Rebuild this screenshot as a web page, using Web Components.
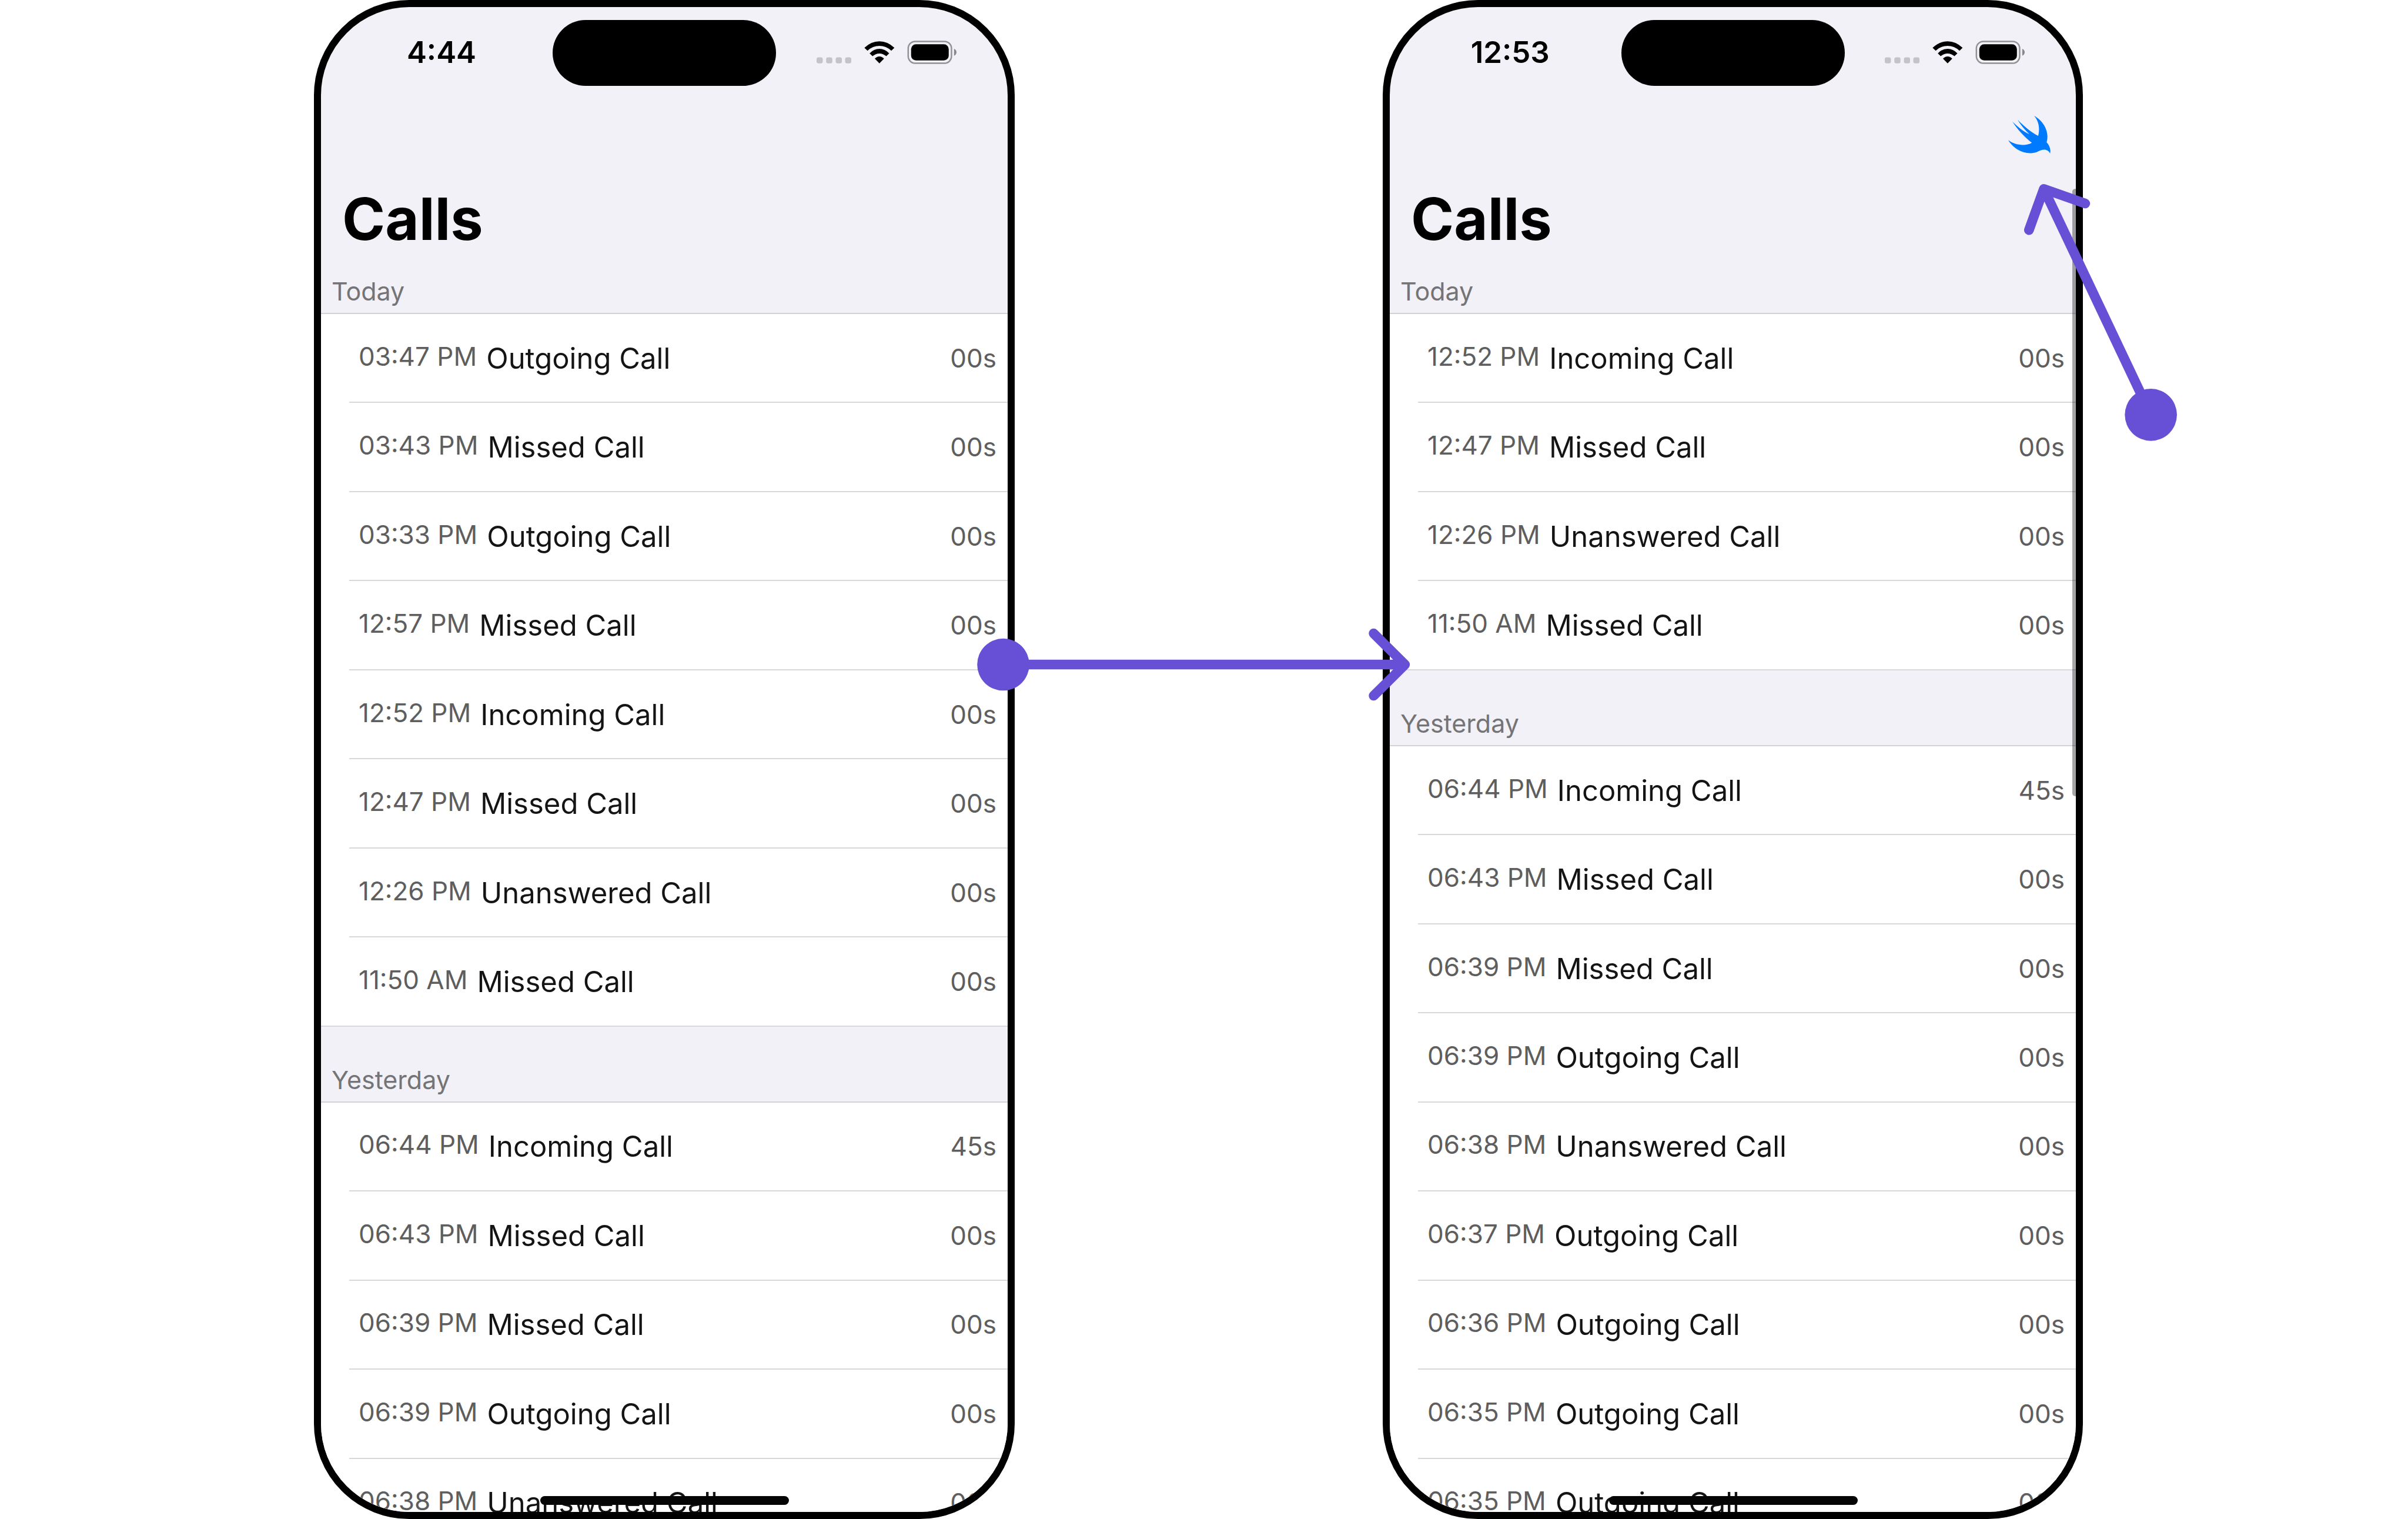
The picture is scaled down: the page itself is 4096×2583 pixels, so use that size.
<!DOCTYPE html>
<html lang="en">
<head>
<meta charset="utf-8">
<title>Calls</title>
<style>
  html, body { margin: 0; height: 100%; background: #fff; overflow: hidden; }
  body { font-family: Inter, "Noto Sans", "Liberation Sans", sans-serif; }
</style>
</head>
<body>
<flow-board>
  <phone-frame time="4:44">
    <call-section label="Today" compact>
      <call-row time="03:47 PM" duration="00s">Outgoing Call</call-row>
      <call-row time="03:43 PM" duration="00s">Missed Call</call-row>
      <call-row time="03:33 PM" duration="00s">Outgoing Call</call-row>
      <call-row time="12:57 PM" duration="00s">Missed Call</call-row>
      <call-row time="12:52 PM" duration="00s">Incoming Call</call-row>
      <call-row time="12:47 PM" duration="00s">Missed Call</call-row>
      <call-row time="12:26 PM" duration="00s">Unanswered Call</call-row>
      <call-row time="11:50 AM" duration="00s">Missed Call</call-row>
    </call-section>
    <call-section label="Yesterday">
      <call-row time="06:44 PM" duration="45s">Incoming Call</call-row>
      <call-row time="06:43 PM" duration="00s">Missed Call</call-row>
      <call-row time="06:39 PM" duration="00s">Missed Call</call-row>
      <call-row time="06:39 PM" duration="00s">Outgoing Call</call-row>
      <call-row time="06:38 PM" duration="00s">Unanswered Call</call-row>
    </call-section>
  </phone-frame>
  <phone-frame time="12:53" scrolling>
    <swift-button slot="action"></swift-button>
    <call-section label="Today" compact>
      <call-row time="12:52 PM" duration="00s">Incoming Call</call-row>
      <call-row time="12:47 PM" duration="00s">Missed Call</call-row>
      <call-row time="12:26 PM" duration="00s">Unanswered Call</call-row>
      <call-row time="11:50 AM" duration="00s">Missed Call</call-row>
    </call-section>
    <call-section label="Yesterday">
      <call-row time="06:44 PM" duration="45s">Incoming Call</call-row>
      <call-row time="06:43 PM" duration="00s">Missed Call</call-row>
      <call-row time="06:39 PM" duration="00s">Missed Call</call-row>
      <call-row time="06:39 PM" duration="00s">Outgoing Call</call-row>
      <call-row time="06:38 PM" duration="00s">Unanswered Call</call-row>
      <call-row time="06:37 PM" duration="00s">Outgoing Call</call-row>
      <call-row time="06:36 PM" duration="00s">Outgoing Call</call-row>
      <call-row time="06:35 PM" duration="00s">Outgoing Call</call-row>
      <call-row time="06:35 PM" duration="00s">Outgoing Call</call-row>
    </call-section>
  </phone-frame>
</flow-board>

<script>
function define(name, html, ready) {
  const template = document.createElement('template');
  template.innerHTML = html;
  customElements.define(name, class extends HTMLElement {
    connectedCallback() {
      if (this.shadowRoot) return;
      this.attachShadow({ mode: 'open' }).append(template.content.cloneNode(true));
      if (ready) ready(this, this.shadowRoot);
    }
  });
}

// Board: two phones side by side, with the flow arrows laid over them
define('flow-board', `
  <style>
    :host { display: grid; position: relative; height: 100vh;
      grid-template-columns: 534fr 1192fr 626fr 1191fr 553fr; grid-template-rows: 100%; }
    ::slotted(:nth-child(1)) { grid-column: 2; }
    ::slotted(:nth-child(2)) { grid-column: 4; }
    flow-arrows { position: absolute; inset: 0; }
  </style>
  <slot></slot>
  <flow-arrows></flow-arrows>`);

define('flow-arrows', `
  <style>
    :host { display: block; pointer-events: none; }
    svg { display: block; width: 100%; height: 100%; }
  </style>
  <svg viewBox="0 0 4947 3120" aria-hidden="true">
    <g fill="none" stroke="#6850d6" stroke-width="20" stroke-linecap="round" stroke-linejoin="round">
      <path d="M2061 1365H2886M2822 1301L2886.500 1365L2822 1429"/>
      <path d="M4419 852L4199 388M4168.500 472.500L4199 388L4284 418"/>
    </g>
    <g fill="#6850d6">
      <circle cx="2061" cy="1365" r="53.500"/>
      <circle cx="4419" cy="852" r="53.500"/>
    </g>
  </svg>`);

define('status-bar', `
  <style>
    :host { flex: none; display: grid; grid-template-columns: 1fr 380px 1fr; align-items: center; padding-top: 22px; }
    .time { padding: 0 0 2px 16px; text-align: center; font-size: 51px; line-height: 60px; font-weight: 600; color: #000; }
    .island { height: 112px; border-radius: 56px; background: #000; }
    svg { display: block; justify-self: end; width: 238px; height: 40px; margin: 0 87px 2px 0; }
  </style>
  <div class="time"></div>
  <div class="island"></div>
  <svg viewBox="97 128 863 144" aria-hidden="true">
    <g fill="#c4c3c9">
      <rect x="97" y="231" width="38" height="37" rx="12"/>
      <rect x="156" y="231" width="38" height="37" rx="12"/>
      <rect x="215" y="231" width="38" height="37" rx="12"/>
      <rect x="273" y="231" width="38" height="37" rx="12"/>
    </g>
    <g fill="#000">
      <path d="M392 172Q433 132 484.500 132Q536 132 577 172L558 190Q526 160 484.500 160Q443 160 411 190Z"/>
      <path d="M424 206Q450 178 484.500 178Q519 178 545 206L527 224Q508 207 484.500 207Q461 207 442 224Z"/>
      <path d="M456 239Q468 225 484.500 225Q501 225 513 239L484.500 268Z"/>
    </g>
    <rect x="662" y="133" width="267" height="134" rx="43" fill="none" stroke="#929294" stroke-width="9"/>
    <rect x="680" y="150" width="232" height="100" rx="30" fill="#000"/>
    <path d="M945 178Q960 185 960 199Q960 214 945 221Z" fill="#88888b"/>
  </svg>`,
  (host, root) => { root.querySelector('.time').textContent = host.getAttribute('time'); });

define('phone-frame', `
  <style>
    :host { display: block; box-sizing: border-box; min-width: 0; height: 100%; position: relative;
      border: 12px solid #000; border-radius: 162px; overflow: hidden; background: #f2f1f7; }
    .screen { display: flex; flex-direction: column; height: 100%; }
    .nav { flex: none; display: flex; align-items: center; justify-content: flex-end;
      height: 166px; padding-right: 43px; }
    h1 { flex: none; margin: 0; padding-left: 36px; font-size: 99px; line-height: 120px; font-weight: 700; color: #000; }
    .log { flex: 1; min-height: 0; display: flex; flex-direction: column; margin-bottom: -61px; }
    .home { position: absolute; left: 50%; bottom: 12px; width: 423px; height: 15px; margin-left: -211px;
      border-radius: 8px; background: #050505; }
    .thumb { display: none; position: absolute; right: 0; top: 309px; width: 6px; height: 1033px;
      border-radius: 5px 0 0 5px; background: rgba(0, 0, 0, .35); }
    :host([scrolling]) .thumb { display: block; }
  </style>
  <div class="screen">
    <status-bar></status-bar>
    <div class="nav"><slot name="action"></slot></div>
    <h1>Calls</h1>
    <div class="log"><slot></slot></div>
  </div>
  <div class="thumb"></div>
  <div class="home"></div>`,
  (host, root) => {
    const bar = root.querySelector('status-bar');
    bar.setAttribute('time', host.getAttribute('time'));
    bar.shadowRoot.querySelector('.time').textContent = host.getAttribute('time');
  });

define('swift-button', `
  <style>
    :host { display: block; }
    button { display: block; margin: 0; padding: 0; border: 0; background: none; }
    svg { display: block; width: 72px; height: 64px; }
  </style>
  <button type="button" aria-label="Swift">
    <svg viewBox="857 597 260 231" aria-hidden="true">
      <path fill="#007aff" d="M857 746C895 775 960 787 1002 762C957 727 915 682 882 631C912 662 948 691 987 710C959 683 933 652 914 620C951 658 995 695 1041 720C1051 681 1048 633 1016 597C1072 627 1112 693 1093 759C1110 777 1120 803 1114 828C1105 808 1084 800 1058 808C1044 812 1025 827 992 826C937 825 888 796 857 746Z"/>
    </svg>
  </button>`);

define('call-section', `
  <style>
    :host { display: contents; }
    h2 { flex: none; box-sizing: border-box; display: flex; align-items: flex-end; height: 129px; margin: 0;
      padding: 0 18px 11px; border-bottom: 2px solid #d3d3d6;
      font-size: 43px; line-height: 52px; font-weight: 400; color: #747476; }
    :host([compact]) h2 { height: 102px; }
    ::slotted(call-row:last-child) { --inset: 0; }
  </style>
  <h2></h2>
  <slot></slot>`,
  (host, root) => { root.querySelector('h2').textContent = host.getAttribute('label'); });

define('call-row', `
  <style>
    :host { flex: 1 1 0; min-height: 0; display: flex; border-bottom: 2px solid transparent;
      background: linear-gradient(#d8d8da, #d8d8da) var(--inset, 48px) 100% / 100% 2px no-repeat border-box, #fff; }
    .row { flex: 1; display: flex; align-items: center; gap: 16px; margin-left: 48px; padding: 0 19px 0 16px; }
    time, .duration { font-size: 44px; line-height: 52px; color: #5e5e5e; }
    time { padding-bottom: 6px; }
    .name { flex: 1; padding-top: 2px; font-size: 49px; line-height: 60px; color: #141414; }
  </style>
  <div class="row">
    <time></time>
    <span class="name"><slot></slot></span>
    <span class="duration"></span>
  </div>`,
  (host, root) => {
    root.querySelector('time').textContent = host.getAttribute('time');
    root.querySelector('.duration').textContent = host.getAttribute('duration');
  });
</script>
</body>
</html>
